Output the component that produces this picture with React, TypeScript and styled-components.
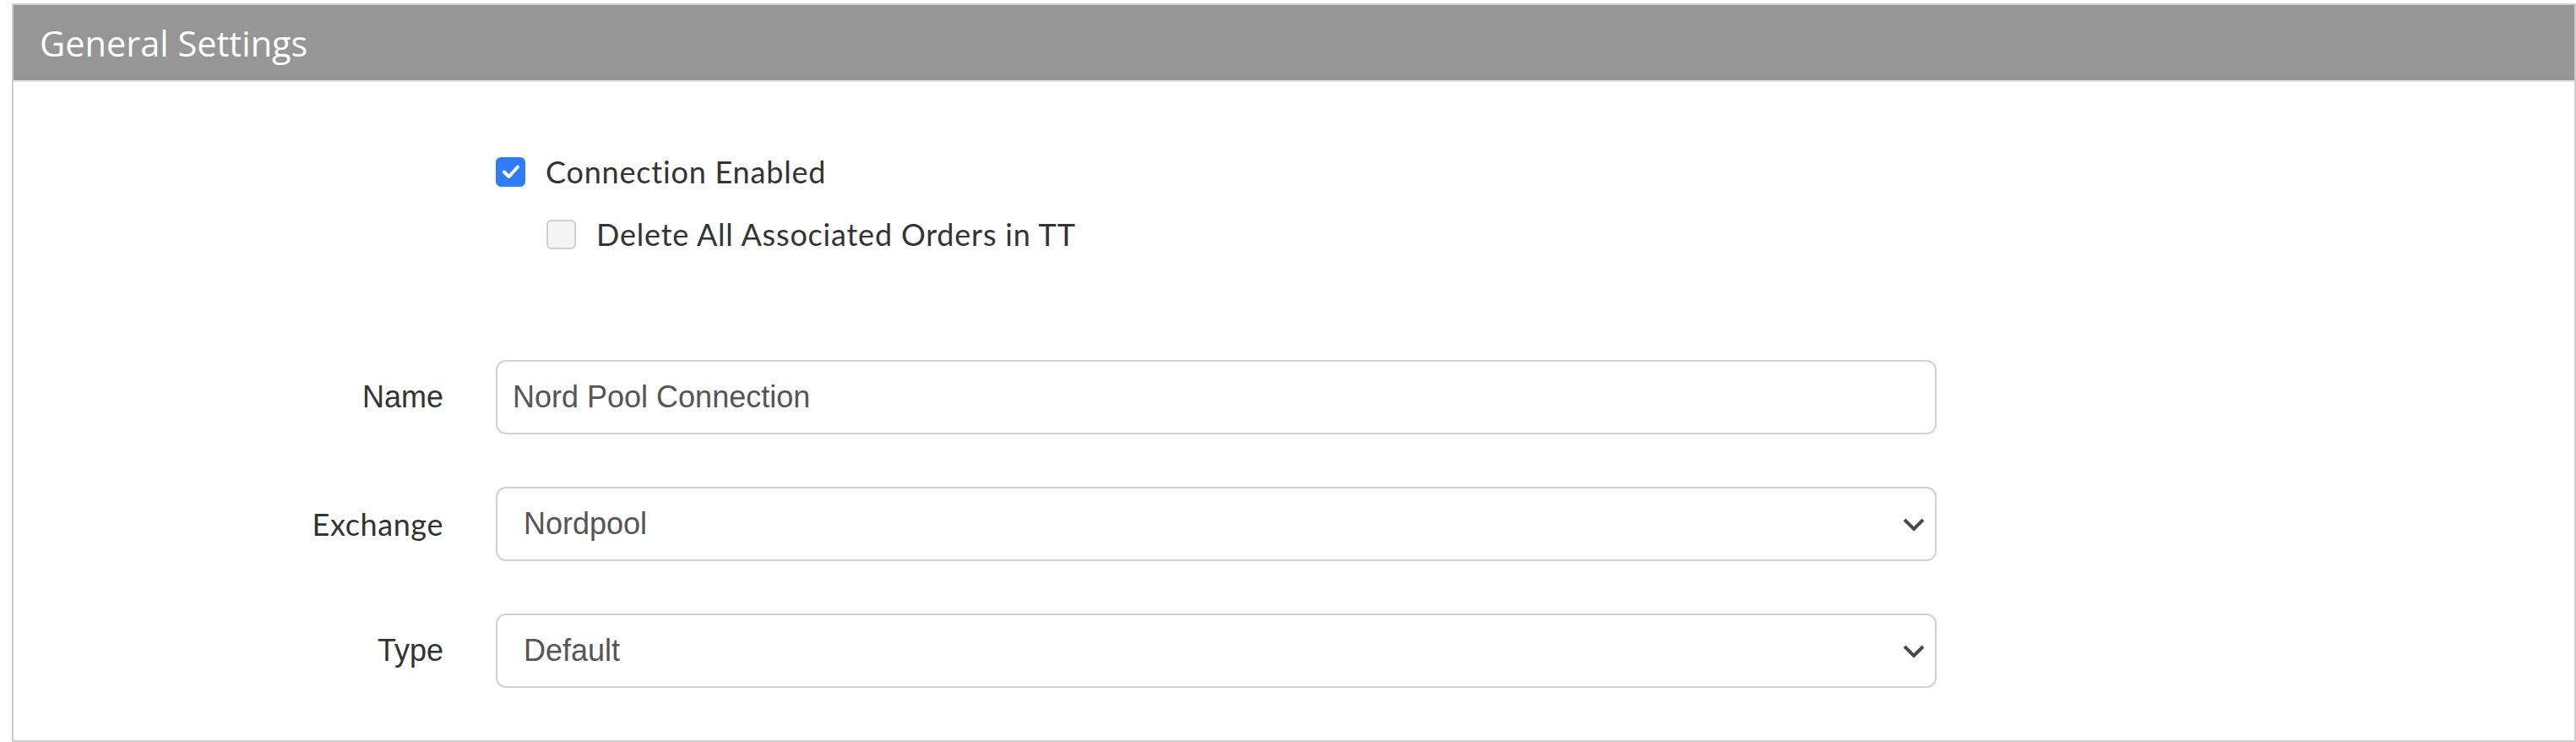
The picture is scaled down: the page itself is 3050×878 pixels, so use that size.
import React from "react";
import styled, { createGlobalStyle } from "styled-components";

const GlobalStyle = createGlobalStyle`
  html, body {
    margin: 0;
    padding: 0;
    background: #fff;
  }
  body {
    font-family: "Liberation Sans", Arial, sans-serif;
  }
`;

const Page = styled.div`
  padding: 4px 0 0 14px;
  height: 878px;
  box-sizing: border-box;
`;

const Panel = styled.section`
  height: 874px;
  box-sizing: border-box;
  border: 2px solid #cdcdcd;
  display: flex;
  flex-direction: column;
`;

const PanelHeader = styled.header`
  height: 89px;
  background: #969696;
  border-bottom: 2px solid #e4e4e4;
  display: flex;
  align-items: center;
  padding-left: 31px;
`;

const Title = styled.h2`
  margin: 0;
  font-family: "Open Sans", "Noto Sans", sans-serif;
  font-weight: 400;
  font-size: 41.5px;
  color: #fff;
`;

const Body = styled.div`
  padding: 88px 0 0 0;
  display: grid;
  grid-template-columns: 509px 1706px;
  column-gap: 62px;
  row-gap: 62px;
  align-items: center;
`;

const CheckGroup = styled.div`
  grid-column: 2;
  display: flex;
  flex-direction: column;
  gap: 38px;
  margin-bottom: 69px;
`;

const CheckRow = styled.label<{ $indent?: number }>`
  display: flex;
  align-items: center;
  gap: 24px;
  padding-left: ${(p) => p.$indent ?? 0}px;
  font-family: Lato, "Open Sans", sans-serif;
  font-size: 36px;
  letter-spacing: 0.8px;
  color: #333;
  height: 36px;
`;

const Box = styled.span<{ $checked?: boolean }>`
  width: 35px;
  height: 35px;
  box-sizing: border-box;
  border-radius: 6px;
  flex: none;
  display: flex;
  align-items: center;
  justify-content: center;
  background: ${(p) => (p.$checked ? "#2e7cf6" : "#f4f4f4")};
  border: 2px solid ${(p) => (p.$checked ? "#2e7cf6" : "#cfcfcf")};
`;

const FieldLabel = styled.div<{ $alt?: boolean }>`
  grid-column: 1;
  text-align: right;
  font-family: ${(p) =>
    p.$alt ? 'Lato, "Open Sans", sans-serif' : '"Liberation Sans", Arial, sans-serif'};
  font-size: ${(p) => (p.$alt ? "36px" : "36px")};
  letter-spacing: ${(p) => (p.$alt ? "0.6px" : "0")};
  color: #333;
`;

const Field = styled.div<{ $pad: number }>`
  grid-column: 2;
  height: 88px;
  box-sizing: border-box;
  border: 2px solid #d0d0d0;
  border-radius: 12px;
  display: flex;
  align-items: center;
  justify-content: space-between;
  padding: 0 10px 0 ${(p) => p.$pad}px;
  font-family: "Liberation Sans", Arial, sans-serif;
  font-size: 36px;
  color: #555;
`;

const Chevron = () => (
  <svg width="30" height="18" viewBox="0 0 30 18">
    <path d="M4 4 L15 15 L26 4" fill="none" stroke="#4a4a4a" strokeWidth="4" />
  </svg>
);

const Check = () => (
  <svg width="22" height="18" viewBox="0 0 22 18">
    <path d="M3 9.5 L8.5 15 L19 3.5" fill="none" stroke="#fff" strokeWidth="4" strokeLinecap="round" strokeLinejoin="round" />
  </svg>
);

export default function App() {
  return (
    <Page>
      <GlobalStyle />
      <Panel>
        <PanelHeader>
          <Title>General Settings</Title>
        </PanelHeader>
        <Body>
          <CheckGroup>
            <CheckRow>
              <Box $checked>
                <Check />
              </Box>
              Connection Enabled
            </CheckRow>
            <CheckRow $indent={60}>
              <Box />
              Delete All Associated Orders in TT
            </CheckRow>
          </CheckGroup>

          <FieldLabel>Name</FieldLabel>
          <Field $pad={18}>Nord Pool Connection</Field>

          <FieldLabel $alt>Exchange</FieldLabel>
          <Field $pad={31}>
            Nordpool
            <Chevron />
          </Field>

          <FieldLabel>Type</FieldLabel>
          <Field $pad={31}>
            Default
            <Chevron />
          </Field>
        </Body>
      </Panel>
    </Page>
  );
}
